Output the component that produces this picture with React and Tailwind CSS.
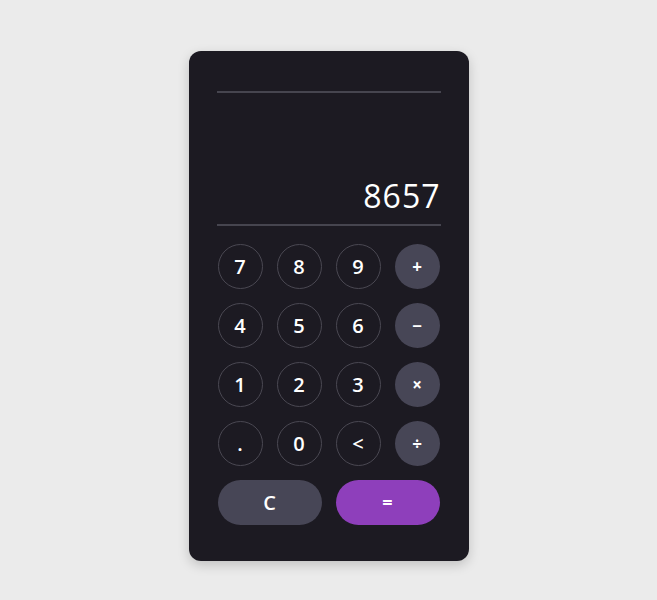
import { useState } from "react";

const keys = [
  ["7", "8", "9", "+"],
  ["4", "5", "6", "−"],
  ["1", "2", "3", "×"],
  [".", "0", "<", "÷"],
];

const ops = ["+", "−", "×", "÷"];

export default function App() {
  const [expr, setExpr] = useState("");
  const [value, setValue] = useState("8657");

  const press = (k) => {
    if (k === "<") return setValue((v) => (v.length > 1 ? v.slice(0, -1) : "0"));
    if (ops.includes(k)) {
      setExpr(value + " " + k);
      setValue("0");
      return;
    }
    setValue((v) => (v === "0" && k !== "." ? k : v + k));
  };

  const clear = () => {
    setExpr("");
    setValue("0");
  };

  const equals = () => {
    if (!expr) return;
    const [a, op] = expr.split(" ");
    const x = parseFloat(a);
    const y = parseFloat(value);
    let r = y;
    if (op === "+") r = x + y;
    if (op === "−") r = x - y;
    if (op === "×") r = x * y;
    if (op === "÷") r = x / y;
    setExpr("");
    setValue(String(r));
  };

  return (
    <div
      className="min-h-screen bg-[#ebebeb] flex justify-center pt-[51px]"
      style={{ fontFamily: '"Open Sans", sans-serif' }}
    >
      <div className="w-[280px] h-[510px] bg-[#1c1a22] rounded-[12px] shadow-[0_4px_12px_rgba(0,0,0,0.18)] px-[28px] pt-[40px]">
        <div className="border-t-2 border-b-2 border-[#46454f] h-[135px] flex flex-col justify-between">
          <div className="text-right text-[#8a8894] text-sm pt-2 h-6">{expr}</div>
          <div className="text-right text-white text-[32px] leading-none tracking-[1px] pb-[12px]">
            {value}
          </div>
        </div>

        <div className="grid grid-cols-4 gap-x-[14px] gap-y-[14px] mt-[18px] px-px">
          {keys.flat().map((k) => (
            <button
              key={k}
              onClick={() => press(k)}
              className={
                ops.includes(k)
                  ? "h-[45px] w-[45px] rounded-full bg-[#474656] text-white text-[17px] font-bold flex items-center justify-center"
                  : "h-[45px] w-[45px] rounded-full border border-[#4a4852] text-white text-[20px] font-semibold flex items-center justify-center"
              }
            >
              {k}
            </button>
          ))}
          <button
            onClick={clear}
            className="col-span-2 h-[45px] rounded-full bg-[#474656] text-white text-[20px] font-semibold flex items-center justify-center"
          >
            C
          </button>
          <button
            onClick={equals}
            className="col-span-2 h-[45px] rounded-full bg-[#8e3fbb] text-white text-[18px] font-bold flex items-center justify-center"
          >
            =
          </button>
        </div>
      </div>
    </div>
  );
}
